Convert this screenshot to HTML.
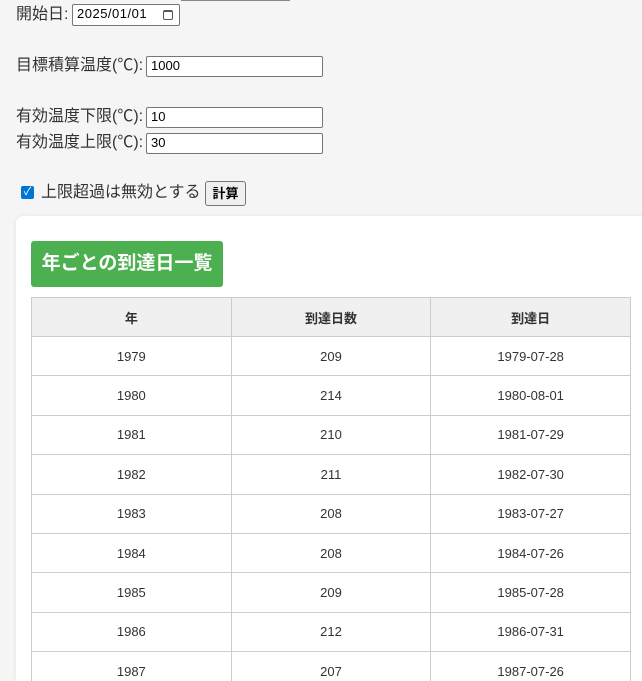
<!DOCTYPE html>
<html style="overflow:hidden;height:681px"><head><meta charset="utf-8">
<style>
html,body{margin:0;padding:0;}
body{width:642px;height:681px;overflow:hidden;background:#f4f5f4;font-family:"Liberation Sans","Noto Sans CJK JP",sans-serif;color:#333;font-size:16px;position:relative;}
.abs{position:absolute;}
.lbl{position:absolute;left:16px;font-size:16px;line-height:20px;color:#333;}
.inp{position:absolute;background:#fff;border:1px solid #767676;border-radius:2px;box-sizing:border-box;font-size:13px;color:#000;padding-left:4px;line-height:18px;font-family:"Liberation Sans","Noto Sans CJK JP",sans-serif;}
.card{position:absolute;left:16px;top:216px;width:640px;height:465px;background:#fff;border-radius:8px 8px 0 0;box-shadow:0 0 4px rgba(0,0,0,0.08);overflow:hidden;}
.h{position:absolute;left:15px;top:25px;width:192px;height:46px;background:#4caf50;border-radius:3px;color:#fff;font-weight:bold;font-size:19px;line-height:46px;text-align:center;}
table{position:absolute;left:15px;top:81px;border-collapse:collapse;width:600px;table-layout:fixed;font-size:13px;color:#333;}
td,th{border:1px solid #ccc;text-align:center;height:38.4px;padding:0;width:33.33%;}
th{background:#f0f0f0;font-weight:bold;height:38px;}
</style></head><body>
<div class="abs" style="left:181px;top:0;width:109px;height:1px;background:#888"></div>
<div class="lbl" style="top:5px">開始日:</div>
<div class="inp" style="left:72px;top:4px;width:108px;height:22px;font-size:13px;letter-spacing:0.5px">2025/01/01<span style="position:absolute;left:90px;top:5px;width:10px;height:10px;border:1px solid #555;border-radius:2px;box-sizing:border-box;border-top-width:2px"></span></div>
<div class="lbl" style="top:56px">目標積算温度(℃):</div>
<div class="inp" style="left:146px;top:56px;width:177px;height:21px;">1000</div>
<div class="lbl" style="top:107px">有効温度下限(℃):</div>
<div class="inp" style="left:146px;top:107px;width:177px;height:21px;">10</div>
<div class="lbl" style="top:133px">有効温度上限(℃):</div>
<div class="inp" style="left:146px;top:133px;width:177px;height:21px;">30</div>
<div class="abs" style="left:21px;top:186px;width:13px;height:13px;background:#0075d4;border-radius:2px;color:#fff;font-size:11px;line-height:13px;text-align:center;">✓</div>
<div class="lbl" style="left:41px;top:183px">上限超過は無効とする</div>
<div class="abs" style="left:205px;top:181px;width:41px;height:25px;box-sizing:border-box;border:1px solid #767676;border-radius:3px;background:#efefef;font-size:13px;font-weight:bold;text-align:center;line-height:23px;color:#000;">計算</div>
<div class="card">
<div class="h">年ごとの到達日一覧</div>
<table>
<tr><th>年</th><th>到達日数</th><th>到達日</th></tr>
<tr><td>1979</td><td>209</td><td>1979-07-28</td></tr>
<tr><td>1980</td><td>214</td><td>1980-08-01</td></tr>
<tr><td>1981</td><td>210</td><td>1981-07-29</td></tr>
<tr><td>1982</td><td>211</td><td>1982-07-30</td></tr>
<tr><td>1983</td><td>208</td><td>1983-07-27</td></tr>
<tr><td>1984</td><td>208</td><td>1984-07-26</td></tr>
<tr><td>1985</td><td>209</td><td>1985-07-28</td></tr>
<tr><td>1986</td><td>212</td><td>1986-07-31</td></tr>
<tr><td>1987</td><td>207</td><td>1987-07-26</td></tr>
</table>
</div>
</body></html>
